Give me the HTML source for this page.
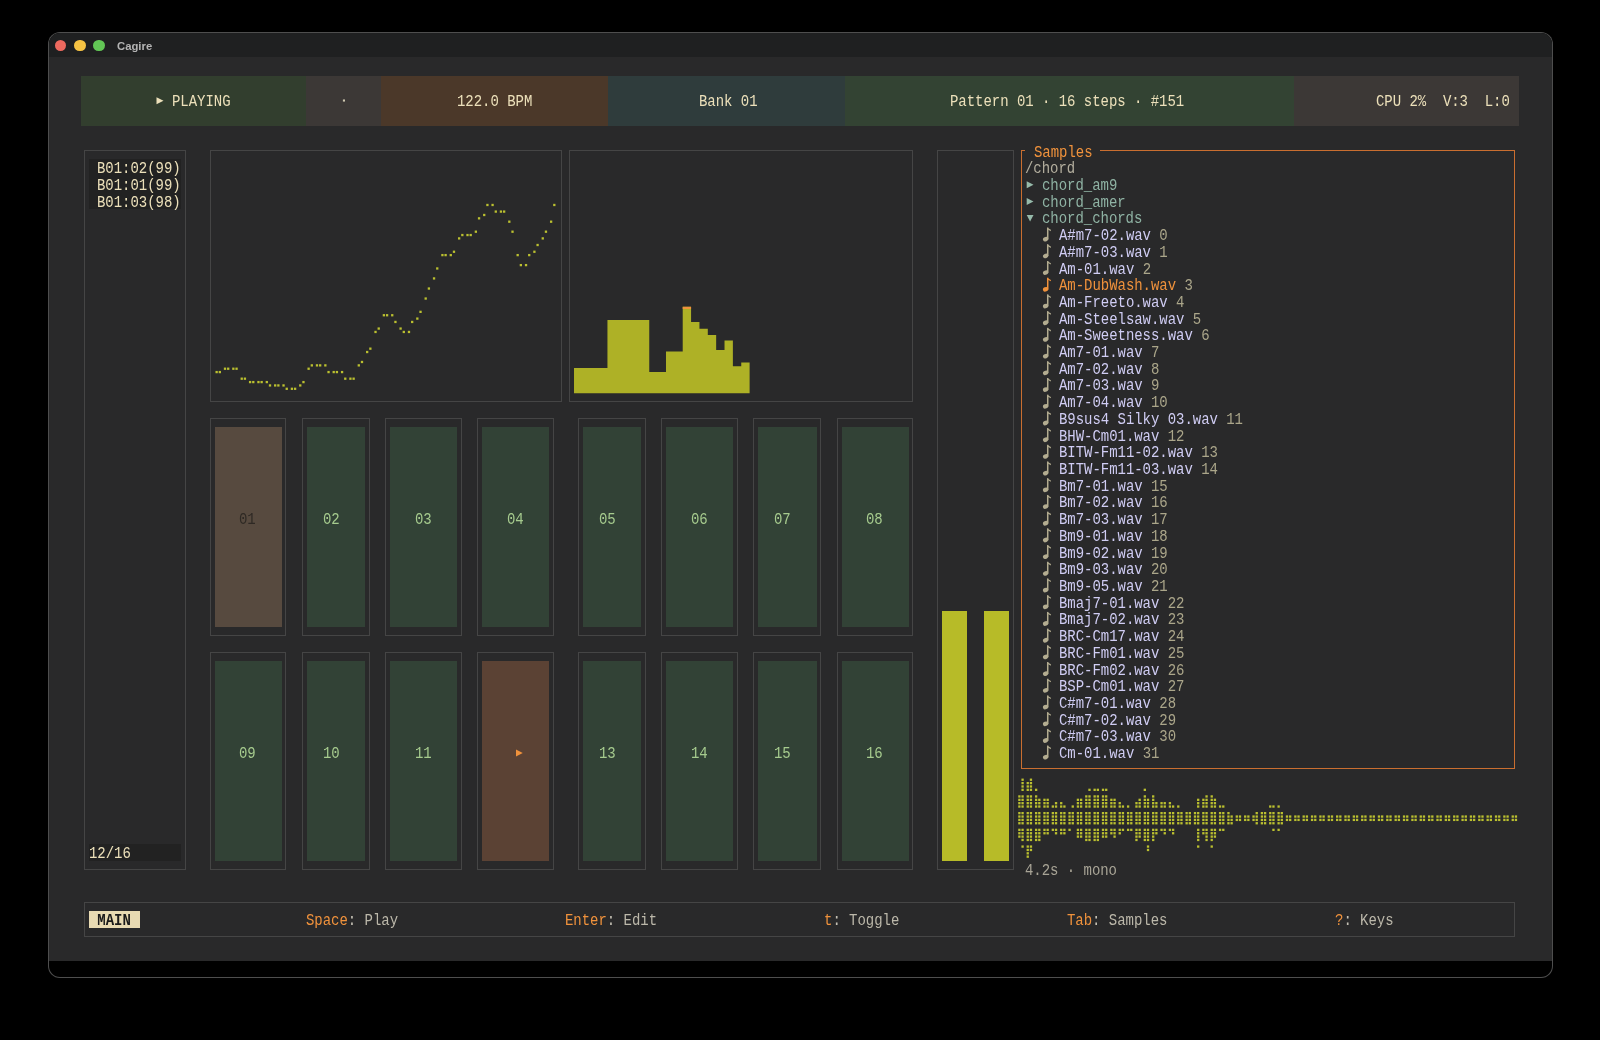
<!DOCTYPE html>
<html><head><meta charset="utf-8"><style>
html,body{margin:0;padding:0;background:#000;width:1600px;height:1040px;overflow:hidden}
.win{position:absolute;left:47.5px;top:32px;width:1505px;height:945.5px;border-radius:12px;background:#000;box-shadow:inset 0 0 0 1px #4e4e4e;overflow:hidden}
.tb{position:absolute;left:48.5px;top:33px;width:1503px;height:23.7px;background:#1f2021;border-radius:11px 11px 0 0}
.term{position:absolute;left:48.5px;top:56.7px;width:1503px;height:904.74px;background:#29292a}
.light{position:absolute;width:11.6px;height:11.6px;border-radius:50%;top:39.8px}
.title{position:absolute;left:117.3px;top:38.7px;font:bold 11.3px/14px "Liberation Sans",sans-serif;color:#b4b4b4;will-change:transform}
.r{position:absolute}
.t{position:absolute;white-space:pre;font-family:"Liberation Mono",monospace;font-size:14.0px;line-height:16.71px;letter-spacing:-0.0394px;transform:scaleY(1.16);transform-origin:0 13.37px;will-change:transform}
.ov{position:absolute;left:0;top:0}
</style></head><body>
<div class="win"></div>
<div class="tb"></div>
<div class="term"></div>
<div class="light" style="left:54.8px;background:#ee6a5f"></div>
<div class="light" style="left:74px;background:#f6c343"></div>
<div class="light" style="left:93.2px;background:#62c655"></div>
<div class="title">Cagire</div>
<div class="r" style="left:81.1px;top:75.81px;width:225.2px;height:50.13px;background:#323e2e;"></div><div class="r" style="left:306.3px;top:75.81px;width:74.9px;height:50.13px;background:#3c3836;"></div><div class="r" style="left:381.2px;top:75.81px;width:226.9px;height:50.13px;background:#4b3829;"></div><div class="r" style="left:608.1px;top:75.81px;width:236.6px;height:50.13px;background:#2f3c3c;"></div><div class="r" style="left:844.7px;top:75.81px;width:449.05px;height:50.13px;background:#334333;"></div><div class="r" style="left:1293.75px;top:75.81px;width:225.65px;height:50.13px;background:#3c3836;"></div><div class="t" style="left:172.23px;top:94.42px;color:#ece0ba;">PLAYING</div><div class="t" style="left:456.54px;top:94.42px;color:#ece0ba;">122.0 BPM</div><div class="t" style="left:699.04px;top:94.42px;color:#ece0ba;">Bank 01</div><div class="t" style="left:949.9px;top:94.42px;color:#ece0ba;">Pattern 01 · 16 steps · #151</div><div class="t" style="left:1376.36px;top:94.42px;color:#ece0ba;">CPU 2%  V:3  L:0</div><div class="r" style="left:84.43px;top:150.2px;width:101.34px;height:1px;background:#454545;"></div><div class="r" style="left:84.43px;top:868.74px;width:101.34px;height:1px;background:#454545;"></div><div class="r" style="left:84.43px;top:150.2px;width:1px;height:719.53px;background:#454545;"></div><div class="r" style="left:184.77px;top:150.2px;width:1px;height:719.53px;background:#454545;"></div><div class="r" style="left:89.46px;top:159.36px;width:91.98px;height:50.13px;background:#222222;"></div><div class="t" style="left:96.97px;top:161.26px;color:#ece0ba;">B01:02(99)</div><div class="t" style="left:96.97px;top:177.97px;color:#ece0ba;">B01:01(99)</div><div class="t" style="left:96.97px;top:194.68px;color:#ece0ba;">B01:03(98)</div><div class="r" style="left:89.46px;top:844.47px;width:91.98px;height:16.71px;background:#222222;"></div><div class="t" style="left:88.61px;top:846.37px;color:#ece0ba;">12/16</div><div class="r" style="left:209.86px;top:150.2px;width:352.2px;height:1px;background:#454545;"></div><div class="r" style="left:209.86px;top:400.86px;width:352.2px;height:1px;background:#454545;"></div><div class="r" style="left:209.86px;top:150.2px;width:1px;height:251.65px;background:#454545;"></div><div class="r" style="left:561.06px;top:150.2px;width:1px;height:251.65px;background:#454545;"></div><div class="r" style="left:569.42px;top:150.2px;width:343.84px;height:1px;background:#454545;"></div><div class="r" style="left:569.42px;top:400.86px;width:343.84px;height:1px;background:#454545;"></div><div class="r" style="left:569.42px;top:150.2px;width:1px;height:251.65px;background:#454545;"></div><div class="r" style="left:912.27px;top:150.2px;width:1px;height:251.65px;background:#454545;"></div><div class="r" style="left:209.86px;top:417.57px;width:76.26px;height:1px;background:#454545;"></div><div class="r" style="left:209.86px;top:634.8px;width:76.26px;height:1px;background:#454545;"></div><div class="r" style="left:209.86px;top:417.57px;width:1px;height:218.23px;background:#454545;"></div><div class="r" style="left:285.12px;top:417.57px;width:1px;height:218.23px;background:#454545;"></div><div class="r" style="left:214.89px;top:426.72px;width:66.9px;height:200.52px;background:#574a3f;"></div><div class="t" style="left:239.13px;top:512.17px;color:#2e2924;">01</div><div class="r" style="left:301.84px;top:417.57px;width:67.9px;height:1px;background:#454545;"></div><div class="r" style="left:301.84px;top:634.8px;width:67.9px;height:1px;background:#454545;"></div><div class="r" style="left:301.84px;top:417.57px;width:1px;height:218.23px;background:#454545;"></div><div class="r" style="left:368.74px;top:417.57px;width:1px;height:218.23px;background:#454545;"></div><div class="r" style="left:306.87px;top:426.72px;width:58.53px;height:200.52px;background:#324236;"></div><div class="t" style="left:322.75px;top:512.17px;color:#a6cb8e;">02</div><div class="r" style="left:385.46px;top:417.57px;width:76.26px;height:1px;background:#454545;"></div><div class="r" style="left:385.46px;top:634.8px;width:76.26px;height:1px;background:#454545;"></div><div class="r" style="left:385.46px;top:417.57px;width:1px;height:218.23px;background:#454545;"></div><div class="r" style="left:460.72px;top:417.57px;width:1px;height:218.23px;background:#454545;"></div><div class="r" style="left:390.49px;top:426.72px;width:66.9px;height:200.52px;background:#324236;"></div><div class="t" style="left:414.73px;top:512.17px;color:#a6cb8e;">03</div><div class="r" style="left:477.44px;top:417.57px;width:76.26px;height:1px;background:#454545;"></div><div class="r" style="left:477.44px;top:634.8px;width:76.26px;height:1px;background:#454545;"></div><div class="r" style="left:477.44px;top:417.57px;width:1px;height:218.23px;background:#454545;"></div><div class="r" style="left:552.7px;top:417.57px;width:1px;height:218.23px;background:#454545;"></div><div class="r" style="left:482.47px;top:426.72px;width:66.9px;height:200.52px;background:#324236;"></div><div class="t" style="left:506.71px;top:512.17px;color:#a6cb8e;">04</div><div class="r" style="left:577.79px;top:417.57px;width:67.9px;height:1px;background:#454545;"></div><div class="r" style="left:577.79px;top:634.8px;width:67.9px;height:1px;background:#454545;"></div><div class="r" style="left:577.79px;top:417.57px;width:1px;height:218.23px;background:#454545;"></div><div class="r" style="left:644.68px;top:417.57px;width:1px;height:218.23px;background:#454545;"></div><div class="r" style="left:582.82px;top:426.72px;width:58.53px;height:200.52px;background:#324236;"></div><div class="t" style="left:598.69px;top:512.17px;color:#a6cb8e;">05</div><div class="r" style="left:661.41px;top:417.57px;width:76.26px;height:1px;background:#454545;"></div><div class="r" style="left:661.41px;top:634.8px;width:76.26px;height:1px;background:#454545;"></div><div class="r" style="left:661.41px;top:417.57px;width:1px;height:218.23px;background:#454545;"></div><div class="r" style="left:736.66px;top:417.57px;width:1px;height:218.23px;background:#454545;"></div><div class="r" style="left:666.44px;top:426.72px;width:66.9px;height:200.52px;background:#324236;"></div><div class="t" style="left:690.67px;top:512.17px;color:#a6cb8e;">06</div><div class="r" style="left:753.39px;top:417.57px;width:67.9px;height:1px;background:#454545;"></div><div class="r" style="left:753.39px;top:634.8px;width:67.9px;height:1px;background:#454545;"></div><div class="r" style="left:753.39px;top:417.57px;width:1px;height:218.23px;background:#454545;"></div><div class="r" style="left:820.28px;top:417.57px;width:1px;height:218.23px;background:#454545;"></div><div class="r" style="left:758.42px;top:426.72px;width:58.53px;height:200.52px;background:#324236;"></div><div class="t" style="left:774.29px;top:512.17px;color:#a6cb8e;">07</div><div class="r" style="left:837.01px;top:417.57px;width:76.26px;height:1px;background:#454545;"></div><div class="r" style="left:837.01px;top:634.8px;width:76.26px;height:1px;background:#454545;"></div><div class="r" style="left:837.01px;top:417.57px;width:1px;height:218.23px;background:#454545;"></div><div class="r" style="left:912.27px;top:417.57px;width:1px;height:218.23px;background:#454545;"></div><div class="r" style="left:842.04px;top:426.72px;width:66.9px;height:200.52px;background:#324236;"></div><div class="t" style="left:866.28px;top:512.17px;color:#a6cb8e;">08</div><div class="r" style="left:209.86px;top:651.51px;width:76.26px;height:1px;background:#454545;"></div><div class="r" style="left:209.86px;top:868.74px;width:76.26px;height:1px;background:#454545;"></div><div class="r" style="left:209.86px;top:651.51px;width:1px;height:218.23px;background:#454545;"></div><div class="r" style="left:285.12px;top:651.51px;width:1px;height:218.23px;background:#454545;"></div><div class="r" style="left:214.89px;top:660.66px;width:66.9px;height:200.52px;background:#324236;"></div><div class="t" style="left:239.13px;top:746.11px;color:#a6cb8e;">09</div><div class="r" style="left:301.84px;top:651.51px;width:67.9px;height:1px;background:#454545;"></div><div class="r" style="left:301.84px;top:868.74px;width:67.9px;height:1px;background:#454545;"></div><div class="r" style="left:301.84px;top:651.51px;width:1px;height:218.23px;background:#454545;"></div><div class="r" style="left:368.74px;top:651.51px;width:1px;height:218.23px;background:#454545;"></div><div class="r" style="left:306.87px;top:660.66px;width:58.53px;height:200.52px;background:#324236;"></div><div class="t" style="left:322.75px;top:746.11px;color:#a6cb8e;">10</div><div class="r" style="left:385.46px;top:651.51px;width:76.26px;height:1px;background:#454545;"></div><div class="r" style="left:385.46px;top:868.74px;width:76.26px;height:1px;background:#454545;"></div><div class="r" style="left:385.46px;top:651.51px;width:1px;height:218.23px;background:#454545;"></div><div class="r" style="left:460.72px;top:651.51px;width:1px;height:218.23px;background:#454545;"></div><div class="r" style="left:390.49px;top:660.66px;width:66.9px;height:200.52px;background:#324236;"></div><div class="t" style="left:414.73px;top:746.11px;color:#a6cb8e;">11</div><div class="r" style="left:477.44px;top:651.51px;width:76.26px;height:1px;background:#454545;"></div><div class="r" style="left:477.44px;top:868.74px;width:76.26px;height:1px;background:#454545;"></div><div class="r" style="left:477.44px;top:651.51px;width:1px;height:218.23px;background:#454545;"></div><div class="r" style="left:552.7px;top:651.51px;width:1px;height:218.23px;background:#454545;"></div><div class="r" style="left:482.47px;top:660.66px;width:66.9px;height:200.52px;background:#5b4234;"></div><div class="r" style="left:577.79px;top:651.51px;width:67.9px;height:1px;background:#454545;"></div><div class="r" style="left:577.79px;top:868.74px;width:67.9px;height:1px;background:#454545;"></div><div class="r" style="left:577.79px;top:651.51px;width:1px;height:218.23px;background:#454545;"></div><div class="r" style="left:644.68px;top:651.51px;width:1px;height:218.23px;background:#454545;"></div><div class="r" style="left:582.82px;top:660.66px;width:58.53px;height:200.52px;background:#324236;"></div><div class="t" style="left:598.69px;top:746.11px;color:#a6cb8e;">13</div><div class="r" style="left:661.41px;top:651.51px;width:76.26px;height:1px;background:#454545;"></div><div class="r" style="left:661.41px;top:868.74px;width:76.26px;height:1px;background:#454545;"></div><div class="r" style="left:661.41px;top:651.51px;width:1px;height:218.23px;background:#454545;"></div><div class="r" style="left:736.66px;top:651.51px;width:1px;height:218.23px;background:#454545;"></div><div class="r" style="left:666.44px;top:660.66px;width:66.9px;height:200.52px;background:#324236;"></div><div class="t" style="left:690.67px;top:746.11px;color:#a6cb8e;">14</div><div class="r" style="left:753.39px;top:651.51px;width:67.9px;height:1px;background:#454545;"></div><div class="r" style="left:753.39px;top:868.74px;width:67.9px;height:1px;background:#454545;"></div><div class="r" style="left:753.39px;top:651.51px;width:1px;height:218.23px;background:#454545;"></div><div class="r" style="left:820.28px;top:651.51px;width:1px;height:218.23px;background:#454545;"></div><div class="r" style="left:758.42px;top:660.66px;width:58.53px;height:200.52px;background:#324236;"></div><div class="t" style="left:774.29px;top:746.11px;color:#a6cb8e;">15</div><div class="r" style="left:837.01px;top:651.51px;width:76.26px;height:1px;background:#454545;"></div><div class="r" style="left:837.01px;top:868.74px;width:76.26px;height:1px;background:#454545;"></div><div class="r" style="left:837.01px;top:651.51px;width:1px;height:218.23px;background:#454545;"></div><div class="r" style="left:912.27px;top:651.51px;width:1px;height:218.23px;background:#454545;"></div><div class="r" style="left:842.04px;top:660.66px;width:66.9px;height:200.52px;background:#324236;"></div><div class="t" style="left:866.28px;top:746.11px;color:#a6cb8e;">16</div><div class="r" style="left:937.35px;top:150.2px;width:76.26px;height:1px;background:#454545;"></div><div class="r" style="left:937.35px;top:868.74px;width:76.26px;height:1px;background:#454545;"></div><div class="r" style="left:937.35px;top:150.2px;width:1px;height:719.53px;background:#454545;"></div><div class="r" style="left:1012.61px;top:150.2px;width:1px;height:719.53px;background:#454545;"></div><div class="r" style="left:942.38px;top:610.53px;width:25.09px;height:250.65px;background:#b7bb28;"></div><div class="r" style="left:984.19px;top:610.53px;width:25.09px;height:250.65px;background:#b7bb28;"></div><div class="r" style="left:1020.97px;top:150.2px;width:4.18px;height:1px;background:#c96e30;"></div><div class="r" style="left:1100.41px;top:150.2px;width:414.92px;height:1px;background:#c96e30;"></div><div class="r" style="left:1020.97px;top:768.48px;width:494.36px;height:1px;background:#c96e30;"></div><div class="r" style="left:1020.97px;top:150.2px;width:1px;height:619.27px;background:#c96e30;"></div><div class="r" style="left:1514.33px;top:150.2px;width:1px;height:619.27px;background:#c96e30;"></div><div class="t" style="left:1033.52px;top:144.55px;color:#f0923c;">Samples</div><div class="t" style="left:1025.15px;top:161.26px;color:#b3ae9e;">/chord</div><div class="t" style="left:1041.88px;top:177.97px;color:#8fb3a4;">chord_am9</div><div class="t" style="left:1041.88px;top:194.68px;color:#8fb3a4;">chord_amer</div><div class="t" style="left:1041.88px;top:211.39px;color:#8fb3a4;">chord_chords</div><div class="t" style="left:1058.6px;top:228.1px"><span style="color:#d0cdf4">A#m7-02.wav</span><span style="color:#aba68a"> 0</span></div><div class="t" style="left:1058.6px;top:244.81px"><span style="color:#d0cdf4">A#m7-03.wav</span><span style="color:#aba68a"> 1</span></div><div class="t" style="left:1058.6px;top:261.52px"><span style="color:#d0cdf4">Am-01.wav</span><span style="color:#aba68a"> 2</span></div><div class="t" style="left:1058.6px;top:278.23px"><span style="color:#f0923c">Am-DubWash.wav</span><span style="color:#aba68a"> 3</span></div><div class="t" style="left:1058.6px;top:294.94px"><span style="color:#d0cdf4">Am-Freeto.wav</span><span style="color:#aba68a"> 4</span></div><div class="t" style="left:1058.6px;top:311.65px"><span style="color:#d0cdf4">Am-Steelsaw.wav</span><span style="color:#aba68a"> 5</span></div><div class="t" style="left:1058.6px;top:328.36px"><span style="color:#d0cdf4">Am-Sweetness.wav</span><span style="color:#aba68a"> 6</span></div><div class="t" style="left:1058.6px;top:345.07px"><span style="color:#d0cdf4">Am7-01.wav</span><span style="color:#aba68a"> 7</span></div><div class="t" style="left:1058.6px;top:361.78px"><span style="color:#d0cdf4">Am7-02.wav</span><span style="color:#aba68a"> 8</span></div><div class="t" style="left:1058.6px;top:378.49px"><span style="color:#d0cdf4">Am7-03.wav</span><span style="color:#aba68a"> 9</span></div><div class="t" style="left:1058.6px;top:395.2px"><span style="color:#d0cdf4">Am7-04.wav</span><span style="color:#aba68a"> 10</span></div><div class="t" style="left:1058.6px;top:411.91px"><span style="color:#d0cdf4">B9sus4 Silky 03.wav</span><span style="color:#aba68a"> 11</span></div><div class="t" style="left:1058.6px;top:428.62px"><span style="color:#d0cdf4">BHW-Cm01.wav</span><span style="color:#aba68a"> 12</span></div><div class="t" style="left:1058.6px;top:445.33px"><span style="color:#d0cdf4">BITW-Fm11-02.wav</span><span style="color:#aba68a"> 13</span></div><div class="t" style="left:1058.6px;top:462.04px"><span style="color:#d0cdf4">BITW-Fm11-03.wav</span><span style="color:#aba68a"> 14</span></div><div class="t" style="left:1058.6px;top:478.75px"><span style="color:#d0cdf4">Bm7-01.wav</span><span style="color:#aba68a"> 15</span></div><div class="t" style="left:1058.6px;top:495.46px"><span style="color:#d0cdf4">Bm7-02.wav</span><span style="color:#aba68a"> 16</span></div><div class="t" style="left:1058.6px;top:512.17px"><span style="color:#d0cdf4">Bm7-03.wav</span><span style="color:#aba68a"> 17</span></div><div class="t" style="left:1058.6px;top:528.88px"><span style="color:#d0cdf4">Bm9-01.wav</span><span style="color:#aba68a"> 18</span></div><div class="t" style="left:1058.6px;top:545.59px"><span style="color:#d0cdf4">Bm9-02.wav</span><span style="color:#aba68a"> 19</span></div><div class="t" style="left:1058.6px;top:562.3px"><span style="color:#d0cdf4">Bm9-03.wav</span><span style="color:#aba68a"> 20</span></div><div class="t" style="left:1058.6px;top:579.01px"><span style="color:#d0cdf4">Bm9-05.wav</span><span style="color:#aba68a"> 21</span></div><div class="t" style="left:1058.6px;top:595.72px"><span style="color:#d0cdf4">Bmaj7-01.wav</span><span style="color:#aba68a"> 22</span></div><div class="t" style="left:1058.6px;top:612.43px"><span style="color:#d0cdf4">Bmaj7-02.wav</span><span style="color:#aba68a"> 23</span></div><div class="t" style="left:1058.6px;top:629.14px"><span style="color:#d0cdf4">BRC-Cm17.wav</span><span style="color:#aba68a"> 24</span></div><div class="t" style="left:1058.6px;top:645.85px"><span style="color:#d0cdf4">BRC-Fm01.wav</span><span style="color:#aba68a"> 25</span></div><div class="t" style="left:1058.6px;top:662.56px"><span style="color:#d0cdf4">BRC-Fm02.wav</span><span style="color:#aba68a"> 26</span></div><div class="t" style="left:1058.6px;top:679.27px"><span style="color:#d0cdf4">BSP-Cm01.wav</span><span style="color:#aba68a"> 27</span></div><div class="t" style="left:1058.6px;top:695.98px"><span style="color:#d0cdf4">C#m7-01.wav</span><span style="color:#aba68a"> 28</span></div><div class="t" style="left:1058.6px;top:712.69px"><span style="color:#d0cdf4">C#m7-02.wav</span><span style="color:#aba68a"> 29</span></div><div class="t" style="left:1058.6px;top:729.4px"><span style="color:#d0cdf4">C#m7-03.wav</span><span style="color:#aba68a"> 30</span></div><div class="t" style="left:1058.6px;top:746.11px"><span style="color:#d0cdf4">Cm-01.wav</span><span style="color:#aba68a"> 31</span></div><div class="t" style="left:1025.15px;top:863.08px;color:#a8a496;">4.2s · mono</div><div class="r" style="left:84.43px;top:902.16px;width:1430.9px;height:1px;background:#454545;"></div><div class="r" style="left:84.43px;top:935.58px;width:1430.9px;height:1px;background:#454545;"></div><div class="r" style="left:84.43px;top:902.16px;width:1px;height:34.42px;background:#454545;"></div><div class="r" style="left:1514.33px;top:902.16px;width:1px;height:34.42px;background:#454545;"></div><div class="r" style="left:89.46px;top:911.31px;width:50.17px;height:16.71px;background:#e8dab2;"></div><div class="t" style="left:88.61px;top:913.21px;color:#1a1a1a;font-weight:bold;"> MAIN </div><div class="t" style="left:306.02px;top:913.21px"><span style="color:#f0923c">Space</span><span style="color:#c4c0b4">: </span><span style="color:#bcb8aa">Play</span></div><div class="t" style="left:565.24px;top:913.21px"><span style="color:#f0923c">Enter</span><span style="color:#c4c0b4">: </span><span style="color:#bcb8aa">Edit</span></div><div class="t" style="left:824.47px;top:913.21px"><span style="color:#f0923c">t</span><span style="color:#c4c0b4">: </span><span style="color:#bcb8aa">Toggle</span></div><div class="t" style="left:1066.96px;top:913.21px"><span style="color:#f0923c">Tab</span><span style="color:#c4c0b4">: </span><span style="color:#bcb8aa">Samples</span></div><div class="t" style="left:1334.55px;top:913.21px"><span style="color:#f0923c">?</span><span style="color:#c4c0b4">: </span><span style="color:#bcb8aa">Keys</span></div>
<svg class="ov" width="1600" height="1040" viewBox="0 0 1600 1040"><g fill="#aeb126"><path d="M574.01 393.3L574.01 368L607.45 368L607.45 319.9L649.26 319.9L649.26 372.1L665.99 372.1L665.99 351.5L682.71 351.5L682.71 306.8L691.07 306.8L691.07 321.9L699.44 321.9L699.44 328.8L707.8 328.8L707.8 335L716.16 335L716.16 350.1L724.52 350.1L724.52 340.5L732.88 340.5L732.88 366.3L741.25 366.3L741.25 362.5L749.61 362.5L749.61 393.3Z"/></g><rect x="682.71" y="306.8" width="8.36" height="2.2" fill="#f0923c"/><path d="M156.51 97.32L163.51 100.82L156.51 104.32Z" fill="#ece0ba"/><rect x="342.9" y="99.47" width="2.1" height="2.1" fill="#cfc8b0"/><path d="M515.97 749.61L522.77 753.11L515.97 756.61Z" fill="#f0923c"/><path d="M1026.7 181.17L1033.5 184.67L1026.7 188.17Z" fill="#96baaa"/><path d="M1026.7 197.88L1033.5 201.38L1026.7 204.88Z" fill="#96baaa"/><path d="M1026.7 214.89L1033.5 214.89L1030.1 221.59Z" fill="#96baaa"/><g fill="#b3ac90"><rect x="1046.98" y="227.6" width="1.5" height="11.8"/><path d="M1046.98 227.6L1050.88 229.8L1050.88 231.2L1046.98 229.1Z"/><ellipse cx="1045.58" cy="239.2" rx="2.7" ry="2.2" transform="rotate(-25 1045.58 239.2)"/></g><g fill="#b3ac90"><rect x="1046.98" y="244.31" width="1.5" height="11.8"/><path d="M1046.98 244.31L1050.88 246.51L1050.88 247.91L1046.98 245.81Z"/><ellipse cx="1045.58" cy="255.91" rx="2.7" ry="2.2" transform="rotate(-25 1045.58 255.91)"/></g><g fill="#b3ac90"><rect x="1046.98" y="261.02" width="1.5" height="11.8"/><path d="M1046.98 261.02L1050.88 263.22L1050.88 264.62L1046.98 262.52Z"/><ellipse cx="1045.58" cy="272.62" rx="2.7" ry="2.2" transform="rotate(-25 1045.58 272.62)"/></g><g fill="#f0923c"><rect x="1046.98" y="277.73" width="1.5" height="11.8"/><path d="M1046.98 277.73L1050.88 279.93L1050.88 281.33L1046.98 279.23Z"/><ellipse cx="1045.58" cy="289.33" rx="2.7" ry="2.2" transform="rotate(-25 1045.58 289.33)"/></g><g fill="#b3ac90"><rect x="1046.98" y="294.44" width="1.5" height="11.8"/><path d="M1046.98 294.44L1050.88 296.64L1050.88 298.04L1046.98 295.94Z"/><ellipse cx="1045.58" cy="306.04" rx="2.7" ry="2.2" transform="rotate(-25 1045.58 306.04)"/></g><g fill="#b3ac90"><rect x="1046.98" y="311.15" width="1.5" height="11.8"/><path d="M1046.98 311.15L1050.88 313.35L1050.88 314.75L1046.98 312.65Z"/><ellipse cx="1045.58" cy="322.75" rx="2.7" ry="2.2" transform="rotate(-25 1045.58 322.75)"/></g><g fill="#b3ac90"><rect x="1046.98" y="327.86" width="1.5" height="11.8"/><path d="M1046.98 327.86L1050.88 330.06L1050.88 331.46L1046.98 329.36Z"/><ellipse cx="1045.58" cy="339.46" rx="2.7" ry="2.2" transform="rotate(-25 1045.58 339.46)"/></g><g fill="#b3ac90"><rect x="1046.98" y="344.57" width="1.5" height="11.8"/><path d="M1046.98 344.57L1050.88 346.77L1050.88 348.17L1046.98 346.07Z"/><ellipse cx="1045.58" cy="356.17" rx="2.7" ry="2.2" transform="rotate(-25 1045.58 356.17)"/></g><g fill="#b3ac90"><rect x="1046.98" y="361.28" width="1.5" height="11.8"/><path d="M1046.98 361.28L1050.88 363.48L1050.88 364.88L1046.98 362.78Z"/><ellipse cx="1045.58" cy="372.88" rx="2.7" ry="2.2" transform="rotate(-25 1045.58 372.88)"/></g><g fill="#b3ac90"><rect x="1046.98" y="377.99" width="1.5" height="11.8"/><path d="M1046.98 377.99L1050.88 380.19L1050.88 381.59L1046.98 379.49Z"/><ellipse cx="1045.58" cy="389.59" rx="2.7" ry="2.2" transform="rotate(-25 1045.58 389.59)"/></g><g fill="#b3ac90"><rect x="1046.98" y="394.7" width="1.5" height="11.8"/><path d="M1046.98 394.7L1050.88 396.9L1050.88 398.3L1046.98 396.2Z"/><ellipse cx="1045.58" cy="406.3" rx="2.7" ry="2.2" transform="rotate(-25 1045.58 406.3)"/></g><g fill="#b3ac90"><rect x="1046.98" y="411.41" width="1.5" height="11.8"/><path d="M1046.98 411.41L1050.88 413.61L1050.88 415.01L1046.98 412.91Z"/><ellipse cx="1045.58" cy="423.01" rx="2.7" ry="2.2" transform="rotate(-25 1045.58 423.01)"/></g><g fill="#b3ac90"><rect x="1046.98" y="428.12" width="1.5" height="11.8"/><path d="M1046.98 428.12L1050.88 430.32L1050.88 431.72L1046.98 429.62Z"/><ellipse cx="1045.58" cy="439.72" rx="2.7" ry="2.2" transform="rotate(-25 1045.58 439.72)"/></g><g fill="#b3ac90"><rect x="1046.98" y="444.83" width="1.5" height="11.8"/><path d="M1046.98 444.83L1050.88 447.03L1050.88 448.43L1046.98 446.33Z"/><ellipse cx="1045.58" cy="456.43" rx="2.7" ry="2.2" transform="rotate(-25 1045.58 456.43)"/></g><g fill="#b3ac90"><rect x="1046.98" y="461.54" width="1.5" height="11.8"/><path d="M1046.98 461.54L1050.88 463.74L1050.88 465.14L1046.98 463.04Z"/><ellipse cx="1045.58" cy="473.14" rx="2.7" ry="2.2" transform="rotate(-25 1045.58 473.14)"/></g><g fill="#b3ac90"><rect x="1046.98" y="478.25" width="1.5" height="11.8"/><path d="M1046.98 478.25L1050.88 480.45L1050.88 481.85L1046.98 479.75Z"/><ellipse cx="1045.58" cy="489.85" rx="2.7" ry="2.2" transform="rotate(-25 1045.58 489.85)"/></g><g fill="#b3ac90"><rect x="1046.98" y="494.96" width="1.5" height="11.8"/><path d="M1046.98 494.96L1050.88 497.16L1050.88 498.56L1046.98 496.46Z"/><ellipse cx="1045.58" cy="506.56" rx="2.7" ry="2.2" transform="rotate(-25 1045.58 506.56)"/></g><g fill="#b3ac90"><rect x="1046.98" y="511.67" width="1.5" height="11.8"/><path d="M1046.98 511.67L1050.88 513.87L1050.88 515.27L1046.98 513.17Z"/><ellipse cx="1045.58" cy="523.27" rx="2.7" ry="2.2" transform="rotate(-25 1045.58 523.27)"/></g><g fill="#b3ac90"><rect x="1046.98" y="528.38" width="1.5" height="11.8"/><path d="M1046.98 528.38L1050.88 530.58L1050.88 531.98L1046.98 529.88Z"/><ellipse cx="1045.58" cy="539.98" rx="2.7" ry="2.2" transform="rotate(-25 1045.58 539.98)"/></g><g fill="#b3ac90"><rect x="1046.98" y="545.09" width="1.5" height="11.8"/><path d="M1046.98 545.09L1050.88 547.29L1050.88 548.69L1046.98 546.59Z"/><ellipse cx="1045.58" cy="556.69" rx="2.7" ry="2.2" transform="rotate(-25 1045.58 556.69)"/></g><g fill="#b3ac90"><rect x="1046.98" y="561.8" width="1.5" height="11.8"/><path d="M1046.98 561.8L1050.88 564L1050.88 565.4L1046.98 563.3Z"/><ellipse cx="1045.58" cy="573.4" rx="2.7" ry="2.2" transform="rotate(-25 1045.58 573.4)"/></g><g fill="#b3ac90"><rect x="1046.98" y="578.51" width="1.5" height="11.8"/><path d="M1046.98 578.51L1050.88 580.71L1050.88 582.11L1046.98 580.01Z"/><ellipse cx="1045.58" cy="590.11" rx="2.7" ry="2.2" transform="rotate(-25 1045.58 590.11)"/></g><g fill="#b3ac90"><rect x="1046.98" y="595.22" width="1.5" height="11.8"/><path d="M1046.98 595.22L1050.88 597.42L1050.88 598.82L1046.98 596.72Z"/><ellipse cx="1045.58" cy="606.82" rx="2.7" ry="2.2" transform="rotate(-25 1045.58 606.82)"/></g><g fill="#b3ac90"><rect x="1046.98" y="611.93" width="1.5" height="11.8"/><path d="M1046.98 611.93L1050.88 614.13L1050.88 615.53L1046.98 613.43Z"/><ellipse cx="1045.58" cy="623.53" rx="2.7" ry="2.2" transform="rotate(-25 1045.58 623.53)"/></g><g fill="#b3ac90"><rect x="1046.98" y="628.64" width="1.5" height="11.8"/><path d="M1046.98 628.64L1050.88 630.84L1050.88 632.24L1046.98 630.14Z"/><ellipse cx="1045.58" cy="640.24" rx="2.7" ry="2.2" transform="rotate(-25 1045.58 640.24)"/></g><g fill="#b3ac90"><rect x="1046.98" y="645.35" width="1.5" height="11.8"/><path d="M1046.98 645.35L1050.88 647.55L1050.88 648.95L1046.98 646.85Z"/><ellipse cx="1045.58" cy="656.95" rx="2.7" ry="2.2" transform="rotate(-25 1045.58 656.95)"/></g><g fill="#b3ac90"><rect x="1046.98" y="662.06" width="1.5" height="11.8"/><path d="M1046.98 662.06L1050.88 664.26L1050.88 665.66L1046.98 663.56Z"/><ellipse cx="1045.58" cy="673.66" rx="2.7" ry="2.2" transform="rotate(-25 1045.58 673.66)"/></g><g fill="#b3ac90"><rect x="1046.98" y="678.77" width="1.5" height="11.8"/><path d="M1046.98 678.77L1050.88 680.97L1050.88 682.37L1046.98 680.27Z"/><ellipse cx="1045.58" cy="690.37" rx="2.7" ry="2.2" transform="rotate(-25 1045.58 690.37)"/></g><g fill="#b3ac90"><rect x="1046.98" y="695.48" width="1.5" height="11.8"/><path d="M1046.98 695.48L1050.88 697.68L1050.88 699.08L1046.98 696.98Z"/><ellipse cx="1045.58" cy="707.08" rx="2.7" ry="2.2" transform="rotate(-25 1045.58 707.08)"/></g><g fill="#b3ac90"><rect x="1046.98" y="712.19" width="1.5" height="11.8"/><path d="M1046.98 712.19L1050.88 714.39L1050.88 715.79L1046.98 713.69Z"/><ellipse cx="1045.58" cy="723.79" rx="2.7" ry="2.2" transform="rotate(-25 1045.58 723.79)"/></g><g fill="#b3ac90"><rect x="1046.98" y="728.9" width="1.5" height="11.8"/><path d="M1046.98 728.9L1050.88 731.1L1050.88 732.5L1046.98 730.4Z"/><ellipse cx="1045.58" cy="740.5" rx="2.7" ry="2.2" transform="rotate(-25 1045.58 740.5)"/></g><g fill="#b3ac90"><rect x="1046.98" y="745.61" width="1.5" height="11.8"/><path d="M1046.98 745.61L1050.88 747.81L1050.88 749.21L1046.98 747.11Z"/><ellipse cx="1045.58" cy="757.21" rx="2.7" ry="2.2" transform="rotate(-25 1045.58 757.21)"/></g><g fill="#bbc030"><rect x="215.49" y="370.93" width="2.3" height="2.3"/><rect x="218.69" y="370.93" width="2.3" height="2.3"/><rect x="223.85" y="367.58" width="2.3" height="2.3"/><rect x="227.05" y="367.58" width="2.3" height="2.3"/><rect x="232.21" y="367.58" width="2.3" height="2.3"/><rect x="235.41" y="367.58" width="2.3" height="2.3"/><rect x="240.58" y="377.54" width="2.3" height="2.3"/><rect x="243.78" y="377.54" width="2.3" height="2.3"/><rect x="248.94" y="380.94" width="2.3" height="2.3"/><rect x="252.14" y="380.94" width="2.3" height="2.3"/><rect x="257.3" y="380.94" width="2.3" height="2.3"/><rect x="260.5" y="380.94" width="2.3" height="2.3"/><rect x="265.66" y="380.94" width="2.3" height="2.3"/><rect x="268.86" y="384.29" width="2.3" height="2.3"/><rect x="274.02" y="384.29" width="2.3" height="2.3"/><rect x="277.22" y="384.29" width="2.3" height="2.3"/><rect x="282.39" y="384.29" width="2.3" height="2.3"/><rect x="285.59" y="387.64" width="2.3" height="2.3"/><rect x="290.75" y="387.64" width="2.3" height="2.3"/><rect x="293.95" y="387.64" width="2.3" height="2.3"/><rect x="299.11" y="384.29" width="2.3" height="2.3"/><rect x="302.31" y="380.94" width="2.3" height="2.3"/><rect x="307.47" y="367.58" width="2.3" height="2.3"/><rect x="310.67" y="364.23" width="2.3" height="2.3"/><rect x="315.83" y="364.23" width="2.3" height="2.3"/><rect x="319.03" y="364.23" width="2.3" height="2.3"/><rect x="324.2" y="364.23" width="2.3" height="2.3"/><rect x="327.4" y="370.93" width="2.3" height="2.3"/><rect x="332.56" y="370.93" width="2.3" height="2.3"/><rect x="335.76" y="370.93" width="2.3" height="2.3"/><rect x="340.92" y="370.93" width="2.3" height="2.3"/><rect x="344.12" y="377.54" width="2.3" height="2.3"/><rect x="349.28" y="377.54" width="2.3" height="2.3"/><rect x="352.48" y="377.54" width="2.3" height="2.3"/><rect x="357.64" y="364.23" width="2.3" height="2.3"/><rect x="360.84" y="360.83" width="2.3" height="2.3"/><rect x="366.01" y="350.87" width="2.3" height="2.3"/><rect x="369.21" y="347.52" width="2.3" height="2.3"/><rect x="374.37" y="330.81" width="2.3" height="2.3"/><rect x="377.57" y="327.41" width="2.3" height="2.3"/><rect x="382.73" y="314.1" width="2.3" height="2.3"/><rect x="385.93" y="314.1" width="2.3" height="2.3"/><rect x="391.09" y="314.1" width="2.3" height="2.3"/><rect x="394.29" y="320.8" width="2.3" height="2.3"/><rect x="399.45" y="327.41" width="2.3" height="2.3"/><rect x="402.65" y="330.81" width="2.3" height="2.3"/><rect x="407.82" y="330.81" width="2.3" height="2.3"/><rect x="411.02" y="320.8" width="2.3" height="2.3"/><rect x="416.18" y="317.45" width="2.3" height="2.3"/><rect x="419.38" y="310.7" width="2.3" height="2.3"/><rect x="424.54" y="297.39" width="2.3" height="2.3"/><rect x="427.74" y="287.38" width="2.3" height="2.3"/><rect x="432.9" y="277.28" width="2.3" height="2.3"/><rect x="436.1" y="267.32" width="2.3" height="2.3"/><rect x="441.26" y="253.96" width="2.3" height="2.3"/><rect x="444.46" y="253.96" width="2.3" height="2.3"/><rect x="449.63" y="253.96" width="2.3" height="2.3"/><rect x="452.83" y="250.61" width="2.3" height="2.3"/><rect x="457.99" y="237.25" width="2.3" height="2.3"/><rect x="461.19" y="233.9" width="2.3" height="2.3"/><rect x="466.35" y="233.9" width="2.3" height="2.3"/><rect x="469.55" y="233.9" width="2.3" height="2.3"/><rect x="474.71" y="230.55" width="2.3" height="2.3"/><rect x="477.91" y="217.19" width="2.3" height="2.3"/><rect x="483.07" y="213.84" width="2.3" height="2.3"/><rect x="486.27" y="203.83" width="2.3" height="2.3"/><rect x="491.44" y="203.83" width="2.3" height="2.3"/><rect x="494.64" y="210.44" width="2.3" height="2.3"/><rect x="499.8" y="210.44" width="2.3" height="2.3"/><rect x="503" y="210.44" width="2.3" height="2.3"/><rect x="508.16" y="220.54" width="2.3" height="2.3"/><rect x="511.36" y="230.55" width="2.3" height="2.3"/><rect x="516.52" y="253.96" width="2.3" height="2.3"/><rect x="519.72" y="263.97" width="2.3" height="2.3"/><rect x="524.88" y="263.97" width="2.3" height="2.3"/><rect x="528.08" y="253.96" width="2.3" height="2.3"/><rect x="533.25" y="250.61" width="2.3" height="2.3"/><rect x="536.45" y="243.86" width="2.3" height="2.3"/><rect x="541.61" y="237.25" width="2.3" height="2.3"/><rect x="544.81" y="230.55" width="2.3" height="2.3"/><rect x="549.97" y="220.54" width="2.3" height="2.3"/><rect x="553.17" y="203.83" width="2.3" height="2.3"/><rect x="1018.24" y="795.29" width="2.3" height="2.3"/><rect x="1018.24" y="798.69" width="2.3" height="2.3"/><rect x="1018.24" y="802.04" width="2.3" height="2.3"/><rect x="1018.24" y="805.39" width="2.3" height="2.3"/><rect x="1018.24" y="812" width="2.3" height="2.3"/><rect x="1018.24" y="815.4" width="2.3" height="2.3"/><rect x="1018.24" y="818.75" width="2.3" height="2.3"/><rect x="1018.24" y="822.1" width="2.3" height="2.3"/><rect x="1018.24" y="828.71" width="2.3" height="2.3"/><rect x="1018.24" y="832.11" width="2.3" height="2.3"/><rect x="1018.24" y="835.46" width="2.3" height="2.3"/><rect x="1021.44" y="778.58" width="2.3" height="2.3"/><rect x="1021.44" y="781.98" width="2.3" height="2.3"/><rect x="1021.44" y="785.33" width="2.3" height="2.3"/><rect x="1021.44" y="788.68" width="2.3" height="2.3"/><rect x="1021.44" y="795.29" width="2.3" height="2.3"/><rect x="1021.44" y="798.69" width="2.3" height="2.3"/><rect x="1021.44" y="802.04" width="2.3" height="2.3"/><rect x="1021.44" y="805.39" width="2.3" height="2.3"/><rect x="1021.44" y="812" width="2.3" height="2.3"/><rect x="1021.44" y="815.4" width="2.3" height="2.3"/><rect x="1021.44" y="818.75" width="2.3" height="2.3"/><rect x="1021.44" y="822.1" width="2.3" height="2.3"/><rect x="1021.44" y="828.71" width="2.3" height="2.3"/><rect x="1021.44" y="832.11" width="2.3" height="2.3"/><rect x="1021.44" y="835.46" width="2.3" height="2.3"/><rect x="1021.44" y="838.81" width="2.3" height="2.3"/><rect x="1021.44" y="845.42" width="2.3" height="2.3"/><rect x="1026.6" y="781.98" width="2.3" height="2.3"/><rect x="1026.6" y="785.33" width="2.3" height="2.3"/><rect x="1026.6" y="788.68" width="2.3" height="2.3"/><rect x="1026.6" y="795.29" width="2.3" height="2.3"/><rect x="1026.6" y="798.69" width="2.3" height="2.3"/><rect x="1026.6" y="802.04" width="2.3" height="2.3"/><rect x="1026.6" y="805.39" width="2.3" height="2.3"/><rect x="1026.6" y="812" width="2.3" height="2.3"/><rect x="1026.6" y="815.4" width="2.3" height="2.3"/><rect x="1026.6" y="818.75" width="2.3" height="2.3"/><rect x="1026.6" y="822.1" width="2.3" height="2.3"/><rect x="1026.6" y="828.71" width="2.3" height="2.3"/><rect x="1026.6" y="832.11" width="2.3" height="2.3"/><rect x="1026.6" y="835.46" width="2.3" height="2.3"/><rect x="1026.6" y="838.81" width="2.3" height="2.3"/><rect x="1026.6" y="845.42" width="2.3" height="2.3"/><rect x="1026.6" y="848.82" width="2.3" height="2.3"/><rect x="1026.6" y="852.17" width="2.3" height="2.3"/><rect x="1026.6" y="855.52" width="2.3" height="2.3"/><rect x="1029.8" y="778.58" width="2.3" height="2.3"/><rect x="1029.8" y="781.98" width="2.3" height="2.3"/><rect x="1029.8" y="785.33" width="2.3" height="2.3"/><rect x="1029.8" y="788.68" width="2.3" height="2.3"/><rect x="1029.8" y="795.29" width="2.3" height="2.3"/><rect x="1029.8" y="798.69" width="2.3" height="2.3"/><rect x="1029.8" y="802.04" width="2.3" height="2.3"/><rect x="1029.8" y="805.39" width="2.3" height="2.3"/><rect x="1029.8" y="812" width="2.3" height="2.3"/><rect x="1029.8" y="815.4" width="2.3" height="2.3"/><rect x="1029.8" y="818.75" width="2.3" height="2.3"/><rect x="1029.8" y="822.1" width="2.3" height="2.3"/><rect x="1029.8" y="828.71" width="2.3" height="2.3"/><rect x="1029.8" y="832.11" width="2.3" height="2.3"/><rect x="1029.8" y="835.46" width="2.3" height="2.3"/><rect x="1029.8" y="838.81" width="2.3" height="2.3"/><rect x="1029.8" y="845.42" width="2.3" height="2.3"/><rect x="1029.8" y="848.82" width="2.3" height="2.3"/><rect x="1034.97" y="788.68" width="2.3" height="2.3"/><rect x="1034.97" y="795.29" width="2.3" height="2.3"/><rect x="1034.97" y="798.69" width="2.3" height="2.3"/><rect x="1034.97" y="802.04" width="2.3" height="2.3"/><rect x="1034.97" y="805.39" width="2.3" height="2.3"/><rect x="1034.97" y="812" width="2.3" height="2.3"/><rect x="1034.97" y="815.4" width="2.3" height="2.3"/><rect x="1034.97" y="818.75" width="2.3" height="2.3"/><rect x="1034.97" y="822.1" width="2.3" height="2.3"/><rect x="1034.97" y="828.71" width="2.3" height="2.3"/><rect x="1034.97" y="832.11" width="2.3" height="2.3"/><rect x="1034.97" y="835.46" width="2.3" height="2.3"/><rect x="1034.97" y="838.81" width="2.3" height="2.3"/><rect x="1038.17" y="798.69" width="2.3" height="2.3"/><rect x="1038.17" y="802.04" width="2.3" height="2.3"/><rect x="1038.17" y="805.39" width="2.3" height="2.3"/><rect x="1038.17" y="812" width="2.3" height="2.3"/><rect x="1038.17" y="815.4" width="2.3" height="2.3"/><rect x="1038.17" y="818.75" width="2.3" height="2.3"/><rect x="1038.17" y="822.1" width="2.3" height="2.3"/><rect x="1038.17" y="828.71" width="2.3" height="2.3"/><rect x="1038.17" y="832.11" width="2.3" height="2.3"/><rect x="1038.17" y="835.46" width="2.3" height="2.3"/><rect x="1038.17" y="838.81" width="2.3" height="2.3"/><rect x="1043.33" y="798.69" width="2.3" height="2.3"/><rect x="1043.33" y="802.04" width="2.3" height="2.3"/><rect x="1043.33" y="805.39" width="2.3" height="2.3"/><rect x="1043.33" y="812" width="2.3" height="2.3"/><rect x="1043.33" y="815.4" width="2.3" height="2.3"/><rect x="1043.33" y="818.75" width="2.3" height="2.3"/><rect x="1043.33" y="822.1" width="2.3" height="2.3"/><rect x="1043.33" y="828.71" width="2.3" height="2.3"/><rect x="1043.33" y="832.11" width="2.3" height="2.3"/><rect x="1046.53" y="798.69" width="2.3" height="2.3"/><rect x="1046.53" y="802.04" width="2.3" height="2.3"/><rect x="1046.53" y="805.39" width="2.3" height="2.3"/><rect x="1046.53" y="812" width="2.3" height="2.3"/><rect x="1046.53" y="815.4" width="2.3" height="2.3"/><rect x="1046.53" y="818.75" width="2.3" height="2.3"/><rect x="1046.53" y="822.1" width="2.3" height="2.3"/><rect x="1046.53" y="828.71" width="2.3" height="2.3"/><rect x="1046.53" y="832.11" width="2.3" height="2.3"/><rect x="1051.69" y="805.39" width="2.3" height="2.3"/><rect x="1051.69" y="812" width="2.3" height="2.3"/><rect x="1051.69" y="815.4" width="2.3" height="2.3"/><rect x="1051.69" y="818.75" width="2.3" height="2.3"/><rect x="1051.69" y="822.1" width="2.3" height="2.3"/><rect x="1051.69" y="828.71" width="2.3" height="2.3"/><rect x="1054.89" y="802.04" width="2.3" height="2.3"/><rect x="1054.89" y="805.39" width="2.3" height="2.3"/><rect x="1054.89" y="812" width="2.3" height="2.3"/><rect x="1054.89" y="815.4" width="2.3" height="2.3"/><rect x="1054.89" y="818.75" width="2.3" height="2.3"/><rect x="1054.89" y="822.1" width="2.3" height="2.3"/><rect x="1054.89" y="828.71" width="2.3" height="2.3"/><rect x="1054.89" y="832.11" width="2.3" height="2.3"/><rect x="1060.05" y="802.04" width="2.3" height="2.3"/><rect x="1060.05" y="805.39" width="2.3" height="2.3"/><rect x="1060.05" y="812" width="2.3" height="2.3"/><rect x="1060.05" y="815.4" width="2.3" height="2.3"/><rect x="1060.05" y="818.75" width="2.3" height="2.3"/><rect x="1060.05" y="822.1" width="2.3" height="2.3"/><rect x="1060.05" y="828.71" width="2.3" height="2.3"/><rect x="1060.05" y="832.11" width="2.3" height="2.3"/><rect x="1063.25" y="805.39" width="2.3" height="2.3"/><rect x="1063.25" y="812" width="2.3" height="2.3"/><rect x="1063.25" y="815.4" width="2.3" height="2.3"/><rect x="1063.25" y="818.75" width="2.3" height="2.3"/><rect x="1063.25" y="822.1" width="2.3" height="2.3"/><rect x="1063.25" y="828.71" width="2.3" height="2.3"/><rect x="1063.25" y="832.11" width="2.3" height="2.3"/><rect x="1068.41" y="812" width="2.3" height="2.3"/><rect x="1068.41" y="815.4" width="2.3" height="2.3"/><rect x="1068.41" y="818.75" width="2.3" height="2.3"/><rect x="1068.41" y="822.1" width="2.3" height="2.3"/><rect x="1068.41" y="828.71" width="2.3" height="2.3"/><rect x="1071.61" y="805.39" width="2.3" height="2.3"/><rect x="1071.61" y="812" width="2.3" height="2.3"/><rect x="1071.61" y="815.4" width="2.3" height="2.3"/><rect x="1071.61" y="818.75" width="2.3" height="2.3"/><rect x="1071.61" y="822.1" width="2.3" height="2.3"/><rect x="1076.78" y="798.69" width="2.3" height="2.3"/><rect x="1076.78" y="802.04" width="2.3" height="2.3"/><rect x="1076.78" y="805.39" width="2.3" height="2.3"/><rect x="1076.78" y="812" width="2.3" height="2.3"/><rect x="1076.78" y="815.4" width="2.3" height="2.3"/><rect x="1076.78" y="818.75" width="2.3" height="2.3"/><rect x="1076.78" y="822.1" width="2.3" height="2.3"/><rect x="1076.78" y="828.71" width="2.3" height="2.3"/><rect x="1076.78" y="832.11" width="2.3" height="2.3"/><rect x="1076.78" y="835.46" width="2.3" height="2.3"/><rect x="1079.98" y="798.69" width="2.3" height="2.3"/><rect x="1079.98" y="802.04" width="2.3" height="2.3"/><rect x="1079.98" y="805.39" width="2.3" height="2.3"/><rect x="1079.98" y="812" width="2.3" height="2.3"/><rect x="1079.98" y="815.4" width="2.3" height="2.3"/><rect x="1079.98" y="818.75" width="2.3" height="2.3"/><rect x="1079.98" y="822.1" width="2.3" height="2.3"/><rect x="1079.98" y="828.71" width="2.3" height="2.3"/><rect x="1079.98" y="832.11" width="2.3" height="2.3"/><rect x="1079.98" y="835.46" width="2.3" height="2.3"/><rect x="1085.14" y="795.29" width="2.3" height="2.3"/><rect x="1085.14" y="798.69" width="2.3" height="2.3"/><rect x="1085.14" y="802.04" width="2.3" height="2.3"/><rect x="1085.14" y="805.39" width="2.3" height="2.3"/><rect x="1085.14" y="812" width="2.3" height="2.3"/><rect x="1085.14" y="815.4" width="2.3" height="2.3"/><rect x="1085.14" y="818.75" width="2.3" height="2.3"/><rect x="1085.14" y="822.1" width="2.3" height="2.3"/><rect x="1085.14" y="828.71" width="2.3" height="2.3"/><rect x="1085.14" y="832.11" width="2.3" height="2.3"/><rect x="1085.14" y="835.46" width="2.3" height="2.3"/><rect x="1085.14" y="838.81" width="2.3" height="2.3"/><rect x="1088.34" y="788.68" width="2.3" height="2.3"/><rect x="1088.34" y="795.29" width="2.3" height="2.3"/><rect x="1088.34" y="798.69" width="2.3" height="2.3"/><rect x="1088.34" y="802.04" width="2.3" height="2.3"/><rect x="1088.34" y="805.39" width="2.3" height="2.3"/><rect x="1088.34" y="812" width="2.3" height="2.3"/><rect x="1088.34" y="815.4" width="2.3" height="2.3"/><rect x="1088.34" y="818.75" width="2.3" height="2.3"/><rect x="1088.34" y="822.1" width="2.3" height="2.3"/><rect x="1088.34" y="828.71" width="2.3" height="2.3"/><rect x="1088.34" y="832.11" width="2.3" height="2.3"/><rect x="1088.34" y="835.46" width="2.3" height="2.3"/><rect x="1088.34" y="838.81" width="2.3" height="2.3"/><rect x="1093.5" y="788.68" width="2.3" height="2.3"/><rect x="1093.5" y="795.29" width="2.3" height="2.3"/><rect x="1093.5" y="798.69" width="2.3" height="2.3"/><rect x="1093.5" y="802.04" width="2.3" height="2.3"/><rect x="1093.5" y="805.39" width="2.3" height="2.3"/><rect x="1093.5" y="812" width="2.3" height="2.3"/><rect x="1093.5" y="815.4" width="2.3" height="2.3"/><rect x="1093.5" y="818.75" width="2.3" height="2.3"/><rect x="1093.5" y="822.1" width="2.3" height="2.3"/><rect x="1093.5" y="828.71" width="2.3" height="2.3"/><rect x="1093.5" y="832.11" width="2.3" height="2.3"/><rect x="1093.5" y="835.46" width="2.3" height="2.3"/><rect x="1093.5" y="838.81" width="2.3" height="2.3"/><rect x="1096.7" y="788.68" width="2.3" height="2.3"/><rect x="1096.7" y="795.29" width="2.3" height="2.3"/><rect x="1096.7" y="798.69" width="2.3" height="2.3"/><rect x="1096.7" y="802.04" width="2.3" height="2.3"/><rect x="1096.7" y="805.39" width="2.3" height="2.3"/><rect x="1096.7" y="812" width="2.3" height="2.3"/><rect x="1096.7" y="815.4" width="2.3" height="2.3"/><rect x="1096.7" y="818.75" width="2.3" height="2.3"/><rect x="1096.7" y="822.1" width="2.3" height="2.3"/><rect x="1096.7" y="828.71" width="2.3" height="2.3"/><rect x="1096.7" y="832.11" width="2.3" height="2.3"/><rect x="1096.7" y="835.46" width="2.3" height="2.3"/><rect x="1096.7" y="838.81" width="2.3" height="2.3"/><rect x="1101.86" y="788.68" width="2.3" height="2.3"/><rect x="1101.86" y="795.29" width="2.3" height="2.3"/><rect x="1101.86" y="798.69" width="2.3" height="2.3"/><rect x="1101.86" y="802.04" width="2.3" height="2.3"/><rect x="1101.86" y="805.39" width="2.3" height="2.3"/><rect x="1101.86" y="812" width="2.3" height="2.3"/><rect x="1101.86" y="815.4" width="2.3" height="2.3"/><rect x="1101.86" y="818.75" width="2.3" height="2.3"/><rect x="1101.86" y="822.1" width="2.3" height="2.3"/><rect x="1101.86" y="828.71" width="2.3" height="2.3"/><rect x="1101.86" y="832.11" width="2.3" height="2.3"/><rect x="1101.86" y="835.46" width="2.3" height="2.3"/><rect x="1105.06" y="788.68" width="2.3" height="2.3"/><rect x="1105.06" y="795.29" width="2.3" height="2.3"/><rect x="1105.06" y="798.69" width="2.3" height="2.3"/><rect x="1105.06" y="802.04" width="2.3" height="2.3"/><rect x="1105.06" y="805.39" width="2.3" height="2.3"/><rect x="1105.06" y="812" width="2.3" height="2.3"/><rect x="1105.06" y="815.4" width="2.3" height="2.3"/><rect x="1105.06" y="818.75" width="2.3" height="2.3"/><rect x="1105.06" y="822.1" width="2.3" height="2.3"/><rect x="1105.06" y="828.71" width="2.3" height="2.3"/><rect x="1105.06" y="832.11" width="2.3" height="2.3"/><rect x="1105.06" y="835.46" width="2.3" height="2.3"/><rect x="1110.22" y="798.69" width="2.3" height="2.3"/><rect x="1110.22" y="802.04" width="2.3" height="2.3"/><rect x="1110.22" y="805.39" width="2.3" height="2.3"/><rect x="1110.22" y="812" width="2.3" height="2.3"/><rect x="1110.22" y="815.4" width="2.3" height="2.3"/><rect x="1110.22" y="818.75" width="2.3" height="2.3"/><rect x="1110.22" y="822.1" width="2.3" height="2.3"/><rect x="1110.22" y="828.71" width="2.3" height="2.3"/><rect x="1110.22" y="832.11" width="2.3" height="2.3"/><rect x="1113.42" y="798.69" width="2.3" height="2.3"/><rect x="1113.42" y="802.04" width="2.3" height="2.3"/><rect x="1113.42" y="805.39" width="2.3" height="2.3"/><rect x="1113.42" y="812" width="2.3" height="2.3"/><rect x="1113.42" y="815.4" width="2.3" height="2.3"/><rect x="1113.42" y="818.75" width="2.3" height="2.3"/><rect x="1113.42" y="822.1" width="2.3" height="2.3"/><rect x="1113.42" y="828.71" width="2.3" height="2.3"/><rect x="1113.42" y="832.11" width="2.3" height="2.3"/><rect x="1113.42" y="835.46" width="2.3" height="2.3"/><rect x="1118.59" y="802.04" width="2.3" height="2.3"/><rect x="1118.59" y="805.39" width="2.3" height="2.3"/><rect x="1118.59" y="812" width="2.3" height="2.3"/><rect x="1118.59" y="815.4" width="2.3" height="2.3"/><rect x="1118.59" y="818.75" width="2.3" height="2.3"/><rect x="1118.59" y="822.1" width="2.3" height="2.3"/><rect x="1118.59" y="828.71" width="2.3" height="2.3"/><rect x="1118.59" y="832.11" width="2.3" height="2.3"/><rect x="1121.79" y="805.39" width="2.3" height="2.3"/><rect x="1121.79" y="812" width="2.3" height="2.3"/><rect x="1121.79" y="815.4" width="2.3" height="2.3"/><rect x="1121.79" y="818.75" width="2.3" height="2.3"/><rect x="1121.79" y="822.1" width="2.3" height="2.3"/><rect x="1121.79" y="828.71" width="2.3" height="2.3"/><rect x="1126.95" y="805.39" width="2.3" height="2.3"/><rect x="1126.95" y="812" width="2.3" height="2.3"/><rect x="1126.95" y="815.4" width="2.3" height="2.3"/><rect x="1126.95" y="818.75" width="2.3" height="2.3"/><rect x="1126.95" y="822.1" width="2.3" height="2.3"/><rect x="1126.95" y="828.71" width="2.3" height="2.3"/><rect x="1130.15" y="812" width="2.3" height="2.3"/><rect x="1130.15" y="815.4" width="2.3" height="2.3"/><rect x="1130.15" y="818.75" width="2.3" height="2.3"/><rect x="1130.15" y="822.1" width="2.3" height="2.3"/><rect x="1130.15" y="828.71" width="2.3" height="2.3"/><rect x="1135.31" y="802.04" width="2.3" height="2.3"/><rect x="1135.31" y="805.39" width="2.3" height="2.3"/><rect x="1135.31" y="812" width="2.3" height="2.3"/><rect x="1135.31" y="815.4" width="2.3" height="2.3"/><rect x="1135.31" y="818.75" width="2.3" height="2.3"/><rect x="1135.31" y="822.1" width="2.3" height="2.3"/><rect x="1135.31" y="828.71" width="2.3" height="2.3"/><rect x="1135.31" y="832.11" width="2.3" height="2.3"/><rect x="1135.31" y="835.46" width="2.3" height="2.3"/><rect x="1135.31" y="838.81" width="2.3" height="2.3"/><rect x="1138.51" y="798.69" width="2.3" height="2.3"/><rect x="1138.51" y="802.04" width="2.3" height="2.3"/><rect x="1138.51" y="805.39" width="2.3" height="2.3"/><rect x="1138.51" y="812" width="2.3" height="2.3"/><rect x="1138.51" y="815.4" width="2.3" height="2.3"/><rect x="1138.51" y="818.75" width="2.3" height="2.3"/><rect x="1138.51" y="822.1" width="2.3" height="2.3"/><rect x="1138.51" y="828.71" width="2.3" height="2.3"/><rect x="1138.51" y="832.11" width="2.3" height="2.3"/><rect x="1138.51" y="835.46" width="2.3" height="2.3"/><rect x="1143.67" y="788.68" width="2.3" height="2.3"/><rect x="1143.67" y="795.29" width="2.3" height="2.3"/><rect x="1143.67" y="798.69" width="2.3" height="2.3"/><rect x="1143.67" y="802.04" width="2.3" height="2.3"/><rect x="1143.67" y="805.39" width="2.3" height="2.3"/><rect x="1143.67" y="812" width="2.3" height="2.3"/><rect x="1143.67" y="815.4" width="2.3" height="2.3"/><rect x="1143.67" y="818.75" width="2.3" height="2.3"/><rect x="1143.67" y="822.1" width="2.3" height="2.3"/><rect x="1143.67" y="828.71" width="2.3" height="2.3"/><rect x="1143.67" y="832.11" width="2.3" height="2.3"/><rect x="1143.67" y="835.46" width="2.3" height="2.3"/><rect x="1143.67" y="838.81" width="2.3" height="2.3"/><rect x="1146.87" y="798.69" width="2.3" height="2.3"/><rect x="1146.87" y="802.04" width="2.3" height="2.3"/><rect x="1146.87" y="805.39" width="2.3" height="2.3"/><rect x="1146.87" y="812" width="2.3" height="2.3"/><rect x="1146.87" y="815.4" width="2.3" height="2.3"/><rect x="1146.87" y="818.75" width="2.3" height="2.3"/><rect x="1146.87" y="822.1" width="2.3" height="2.3"/><rect x="1146.87" y="828.71" width="2.3" height="2.3"/><rect x="1146.87" y="832.11" width="2.3" height="2.3"/><rect x="1146.87" y="835.46" width="2.3" height="2.3"/><rect x="1146.87" y="838.81" width="2.3" height="2.3"/><rect x="1146.87" y="845.42" width="2.3" height="2.3"/><rect x="1146.87" y="848.82" width="2.3" height="2.3"/><rect x="1152.03" y="795.29" width="2.3" height="2.3"/><rect x="1152.03" y="798.69" width="2.3" height="2.3"/><rect x="1152.03" y="802.04" width="2.3" height="2.3"/><rect x="1152.03" y="805.39" width="2.3" height="2.3"/><rect x="1152.03" y="812" width="2.3" height="2.3"/><rect x="1152.03" y="815.4" width="2.3" height="2.3"/><rect x="1152.03" y="818.75" width="2.3" height="2.3"/><rect x="1152.03" y="822.1" width="2.3" height="2.3"/><rect x="1152.03" y="828.71" width="2.3" height="2.3"/><rect x="1152.03" y="832.11" width="2.3" height="2.3"/><rect x="1152.03" y="835.46" width="2.3" height="2.3"/><rect x="1152.03" y="838.81" width="2.3" height="2.3"/><rect x="1155.23" y="802.04" width="2.3" height="2.3"/><rect x="1155.23" y="805.39" width="2.3" height="2.3"/><rect x="1155.23" y="812" width="2.3" height="2.3"/><rect x="1155.23" y="815.4" width="2.3" height="2.3"/><rect x="1155.23" y="818.75" width="2.3" height="2.3"/><rect x="1155.23" y="822.1" width="2.3" height="2.3"/><rect x="1155.23" y="828.71" width="2.3" height="2.3"/><rect x="1155.23" y="832.11" width="2.3" height="2.3"/><rect x="1160.4" y="802.04" width="2.3" height="2.3"/><rect x="1160.4" y="805.39" width="2.3" height="2.3"/><rect x="1160.4" y="812" width="2.3" height="2.3"/><rect x="1160.4" y="815.4" width="2.3" height="2.3"/><rect x="1160.4" y="818.75" width="2.3" height="2.3"/><rect x="1160.4" y="822.1" width="2.3" height="2.3"/><rect x="1160.4" y="828.71" width="2.3" height="2.3"/><rect x="1163.6" y="802.04" width="2.3" height="2.3"/><rect x="1163.6" y="805.39" width="2.3" height="2.3"/><rect x="1163.6" y="812" width="2.3" height="2.3"/><rect x="1163.6" y="815.4" width="2.3" height="2.3"/><rect x="1163.6" y="818.75" width="2.3" height="2.3"/><rect x="1163.6" y="822.1" width="2.3" height="2.3"/><rect x="1163.6" y="828.71" width="2.3" height="2.3"/><rect x="1163.6" y="832.11" width="2.3" height="2.3"/><rect x="1168.76" y="802.04" width="2.3" height="2.3"/><rect x="1168.76" y="805.39" width="2.3" height="2.3"/><rect x="1168.76" y="812" width="2.3" height="2.3"/><rect x="1168.76" y="815.4" width="2.3" height="2.3"/><rect x="1168.76" y="818.75" width="2.3" height="2.3"/><rect x="1168.76" y="822.1" width="2.3" height="2.3"/><rect x="1168.76" y="828.71" width="2.3" height="2.3"/><rect x="1171.96" y="805.39" width="2.3" height="2.3"/><rect x="1171.96" y="812" width="2.3" height="2.3"/><rect x="1171.96" y="815.4" width="2.3" height="2.3"/><rect x="1171.96" y="818.75" width="2.3" height="2.3"/><rect x="1171.96" y="822.1" width="2.3" height="2.3"/><rect x="1171.96" y="828.71" width="2.3" height="2.3"/><rect x="1171.96" y="832.11" width="2.3" height="2.3"/><rect x="1177.12" y="805.39" width="2.3" height="2.3"/><rect x="1177.12" y="812" width="2.3" height="2.3"/><rect x="1177.12" y="815.4" width="2.3" height="2.3"/><rect x="1177.12" y="818.75" width="2.3" height="2.3"/><rect x="1177.12" y="822.1" width="2.3" height="2.3"/><rect x="1180.32" y="812" width="2.3" height="2.3"/><rect x="1180.32" y="815.4" width="2.3" height="2.3"/><rect x="1180.32" y="818.75" width="2.3" height="2.3"/><rect x="1180.32" y="822.1" width="2.3" height="2.3"/><rect x="1185.48" y="812" width="2.3" height="2.3"/><rect x="1185.48" y="815.4" width="2.3" height="2.3"/><rect x="1185.48" y="818.75" width="2.3" height="2.3"/><rect x="1185.48" y="822.1" width="2.3" height="2.3"/><rect x="1188.68" y="812" width="2.3" height="2.3"/><rect x="1188.68" y="815.4" width="2.3" height="2.3"/><rect x="1188.68" y="818.75" width="2.3" height="2.3"/><rect x="1188.68" y="822.1" width="2.3" height="2.3"/><rect x="1193.84" y="812" width="2.3" height="2.3"/><rect x="1193.84" y="815.4" width="2.3" height="2.3"/><rect x="1193.84" y="818.75" width="2.3" height="2.3"/><rect x="1193.84" y="822.1" width="2.3" height="2.3"/><rect x="1197.04" y="798.69" width="2.3" height="2.3"/><rect x="1197.04" y="802.04" width="2.3" height="2.3"/><rect x="1197.04" y="805.39" width="2.3" height="2.3"/><rect x="1197.04" y="812" width="2.3" height="2.3"/><rect x="1197.04" y="815.4" width="2.3" height="2.3"/><rect x="1197.04" y="818.75" width="2.3" height="2.3"/><rect x="1197.04" y="822.1" width="2.3" height="2.3"/><rect x="1197.04" y="828.71" width="2.3" height="2.3"/><rect x="1197.04" y="832.11" width="2.3" height="2.3"/><rect x="1197.04" y="835.46" width="2.3" height="2.3"/><rect x="1197.04" y="838.81" width="2.3" height="2.3"/><rect x="1197.04" y="845.42" width="2.3" height="2.3"/><rect x="1202.21" y="798.69" width="2.3" height="2.3"/><rect x="1202.21" y="802.04" width="2.3" height="2.3"/><rect x="1202.21" y="805.39" width="2.3" height="2.3"/><rect x="1202.21" y="812" width="2.3" height="2.3"/><rect x="1202.21" y="815.4" width="2.3" height="2.3"/><rect x="1202.21" y="818.75" width="2.3" height="2.3"/><rect x="1202.21" y="822.1" width="2.3" height="2.3"/><rect x="1202.21" y="828.71" width="2.3" height="2.3"/><rect x="1202.21" y="832.11" width="2.3" height="2.3"/><rect x="1205.41" y="795.29" width="2.3" height="2.3"/><rect x="1205.41" y="798.69" width="2.3" height="2.3"/><rect x="1205.41" y="802.04" width="2.3" height="2.3"/><rect x="1205.41" y="805.39" width="2.3" height="2.3"/><rect x="1205.41" y="812" width="2.3" height="2.3"/><rect x="1205.41" y="815.4" width="2.3" height="2.3"/><rect x="1205.41" y="818.75" width="2.3" height="2.3"/><rect x="1205.41" y="822.1" width="2.3" height="2.3"/><rect x="1205.41" y="828.71" width="2.3" height="2.3"/><rect x="1205.41" y="832.11" width="2.3" height="2.3"/><rect x="1205.41" y="835.46" width="2.3" height="2.3"/><rect x="1205.41" y="838.81" width="2.3" height="2.3"/><rect x="1210.57" y="795.29" width="2.3" height="2.3"/><rect x="1210.57" y="798.69" width="2.3" height="2.3"/><rect x="1210.57" y="802.04" width="2.3" height="2.3"/><rect x="1210.57" y="805.39" width="2.3" height="2.3"/><rect x="1210.57" y="812" width="2.3" height="2.3"/><rect x="1210.57" y="815.4" width="2.3" height="2.3"/><rect x="1210.57" y="818.75" width="2.3" height="2.3"/><rect x="1210.57" y="822.1" width="2.3" height="2.3"/><rect x="1210.57" y="828.71" width="2.3" height="2.3"/><rect x="1210.57" y="832.11" width="2.3" height="2.3"/><rect x="1210.57" y="835.46" width="2.3" height="2.3"/><rect x="1210.57" y="838.81" width="2.3" height="2.3"/><rect x="1210.57" y="845.42" width="2.3" height="2.3"/><rect x="1213.77" y="798.69" width="2.3" height="2.3"/><rect x="1213.77" y="802.04" width="2.3" height="2.3"/><rect x="1213.77" y="805.39" width="2.3" height="2.3"/><rect x="1213.77" y="812" width="2.3" height="2.3"/><rect x="1213.77" y="815.4" width="2.3" height="2.3"/><rect x="1213.77" y="818.75" width="2.3" height="2.3"/><rect x="1213.77" y="822.1" width="2.3" height="2.3"/><rect x="1213.77" y="828.71" width="2.3" height="2.3"/><rect x="1213.77" y="832.11" width="2.3" height="2.3"/><rect x="1213.77" y="835.46" width="2.3" height="2.3"/><rect x="1218.93" y="805.39" width="2.3" height="2.3"/><rect x="1218.93" y="812" width="2.3" height="2.3"/><rect x="1218.93" y="815.4" width="2.3" height="2.3"/><rect x="1218.93" y="818.75" width="2.3" height="2.3"/><rect x="1218.93" y="822.1" width="2.3" height="2.3"/><rect x="1218.93" y="828.71" width="2.3" height="2.3"/><rect x="1222.13" y="805.39" width="2.3" height="2.3"/><rect x="1222.13" y="812" width="2.3" height="2.3"/><rect x="1222.13" y="815.4" width="2.3" height="2.3"/><rect x="1222.13" y="818.75" width="2.3" height="2.3"/><rect x="1222.13" y="822.1" width="2.3" height="2.3"/><rect x="1222.13" y="828.71" width="2.3" height="2.3"/><rect x="1227.29" y="812" width="2.3" height="2.3"/><rect x="1227.29" y="815.4" width="2.3" height="2.3"/><rect x="1227.29" y="818.75" width="2.3" height="2.3"/><rect x="1227.29" y="822.1" width="2.3" height="2.3"/><rect x="1230.49" y="815.4" width="2.3" height="2.3"/><rect x="1230.49" y="818.75" width="2.3" height="2.3"/><rect x="1230.49" y="822.1" width="2.3" height="2.3"/><rect x="1235.65" y="815.4" width="2.3" height="2.3"/><rect x="1235.65" y="818.75" width="2.3" height="2.3"/><rect x="1238.85" y="815.4" width="2.3" height="2.3"/><rect x="1238.85" y="818.75" width="2.3" height="2.3"/><rect x="1244.02" y="815.4" width="2.3" height="2.3"/><rect x="1244.02" y="818.75" width="2.3" height="2.3"/><rect x="1247.22" y="815.4" width="2.3" height="2.3"/><rect x="1247.22" y="818.75" width="2.3" height="2.3"/><rect x="1252.38" y="815.4" width="2.3" height="2.3"/><rect x="1252.38" y="818.75" width="2.3" height="2.3"/><rect x="1255.58" y="812" width="2.3" height="2.3"/><rect x="1255.58" y="815.4" width="2.3" height="2.3"/><rect x="1255.58" y="818.75" width="2.3" height="2.3"/><rect x="1255.58" y="822.1" width="2.3" height="2.3"/><rect x="1260.74" y="812" width="2.3" height="2.3"/><rect x="1260.74" y="815.4" width="2.3" height="2.3"/><rect x="1260.74" y="818.75" width="2.3" height="2.3"/><rect x="1260.74" y="822.1" width="2.3" height="2.3"/><rect x="1263.94" y="812" width="2.3" height="2.3"/><rect x="1263.94" y="815.4" width="2.3" height="2.3"/><rect x="1263.94" y="818.75" width="2.3" height="2.3"/><rect x="1263.94" y="822.1" width="2.3" height="2.3"/><rect x="1269.1" y="805.39" width="2.3" height="2.3"/><rect x="1269.1" y="812" width="2.3" height="2.3"/><rect x="1269.1" y="815.4" width="2.3" height="2.3"/><rect x="1269.1" y="818.75" width="2.3" height="2.3"/><rect x="1269.1" y="822.1" width="2.3" height="2.3"/><rect x="1272.3" y="805.39" width="2.3" height="2.3"/><rect x="1272.3" y="812" width="2.3" height="2.3"/><rect x="1272.3" y="815.4" width="2.3" height="2.3"/><rect x="1272.3" y="818.75" width="2.3" height="2.3"/><rect x="1272.3" y="822.1" width="2.3" height="2.3"/><rect x="1272.3" y="828.71" width="2.3" height="2.3"/><rect x="1277.46" y="805.39" width="2.3" height="2.3"/><rect x="1277.46" y="812" width="2.3" height="2.3"/><rect x="1277.46" y="815.4" width="2.3" height="2.3"/><rect x="1277.46" y="818.75" width="2.3" height="2.3"/><rect x="1277.46" y="822.1" width="2.3" height="2.3"/><rect x="1277.46" y="828.71" width="2.3" height="2.3"/><rect x="1280.66" y="812" width="2.3" height="2.3"/><rect x="1280.66" y="815.4" width="2.3" height="2.3"/><rect x="1280.66" y="818.75" width="2.3" height="2.3"/><rect x="1280.66" y="822.1" width="2.3" height="2.3"/><rect x="1285.83" y="815.4" width="2.3" height="2.3"/><rect x="1285.83" y="818.75" width="2.3" height="2.3"/><rect x="1289.03" y="815.4" width="2.3" height="2.3"/><rect x="1289.03" y="818.75" width="2.3" height="2.3"/><rect x="1294.19" y="815.4" width="2.3" height="2.3"/><rect x="1294.19" y="818.75" width="2.3" height="2.3"/><rect x="1297.39" y="815.4" width="2.3" height="2.3"/><rect x="1297.39" y="818.75" width="2.3" height="2.3"/><rect x="1302.55" y="815.4" width="2.3" height="2.3"/><rect x="1302.55" y="818.75" width="2.3" height="2.3"/><rect x="1305.75" y="815.4" width="2.3" height="2.3"/><rect x="1305.75" y="818.75" width="2.3" height="2.3"/><rect x="1310.91" y="815.4" width="2.3" height="2.3"/><rect x="1310.91" y="818.75" width="2.3" height="2.3"/><rect x="1314.11" y="815.4" width="2.3" height="2.3"/><rect x="1314.11" y="818.75" width="2.3" height="2.3"/><rect x="1319.27" y="815.4" width="2.3" height="2.3"/><rect x="1319.27" y="818.75" width="2.3" height="2.3"/><rect x="1322.47" y="815.4" width="2.3" height="2.3"/><rect x="1322.47" y="818.75" width="2.3" height="2.3"/><rect x="1327.64" y="815.4" width="2.3" height="2.3"/><rect x="1327.64" y="818.75" width="2.3" height="2.3"/><rect x="1330.84" y="815.4" width="2.3" height="2.3"/><rect x="1330.84" y="818.75" width="2.3" height="2.3"/><rect x="1336" y="815.4" width="2.3" height="2.3"/><rect x="1336" y="818.75" width="2.3" height="2.3"/><rect x="1339.2" y="815.4" width="2.3" height="2.3"/><rect x="1339.2" y="818.75" width="2.3" height="2.3"/><rect x="1344.36" y="815.4" width="2.3" height="2.3"/><rect x="1344.36" y="818.75" width="2.3" height="2.3"/><rect x="1347.56" y="815.4" width="2.3" height="2.3"/><rect x="1347.56" y="818.75" width="2.3" height="2.3"/><rect x="1352.72" y="815.4" width="2.3" height="2.3"/><rect x="1352.72" y="818.75" width="2.3" height="2.3"/><rect x="1355.92" y="815.4" width="2.3" height="2.3"/><rect x="1355.92" y="818.75" width="2.3" height="2.3"/><rect x="1361.08" y="815.4" width="2.3" height="2.3"/><rect x="1361.08" y="818.75" width="2.3" height="2.3"/><rect x="1364.28" y="815.4" width="2.3" height="2.3"/><rect x="1364.28" y="818.75" width="2.3" height="2.3"/><rect x="1369.45" y="815.4" width="2.3" height="2.3"/><rect x="1369.45" y="818.75" width="2.3" height="2.3"/><rect x="1372.65" y="815.4" width="2.3" height="2.3"/><rect x="1372.65" y="818.75" width="2.3" height="2.3"/><rect x="1377.81" y="815.4" width="2.3" height="2.3"/><rect x="1377.81" y="818.75" width="2.3" height="2.3"/><rect x="1381.01" y="815.4" width="2.3" height="2.3"/><rect x="1381.01" y="818.75" width="2.3" height="2.3"/><rect x="1386.17" y="815.4" width="2.3" height="2.3"/><rect x="1386.17" y="818.75" width="2.3" height="2.3"/><rect x="1389.37" y="815.4" width="2.3" height="2.3"/><rect x="1389.37" y="818.75" width="2.3" height="2.3"/><rect x="1394.53" y="815.4" width="2.3" height="2.3"/><rect x="1394.53" y="818.75" width="2.3" height="2.3"/><rect x="1397.73" y="815.4" width="2.3" height="2.3"/><rect x="1397.73" y="818.75" width="2.3" height="2.3"/><rect x="1402.89" y="815.4" width="2.3" height="2.3"/><rect x="1402.89" y="818.75" width="2.3" height="2.3"/><rect x="1406.09" y="815.4" width="2.3" height="2.3"/><rect x="1406.09" y="818.75" width="2.3" height="2.3"/><rect x="1411.26" y="815.4" width="2.3" height="2.3"/><rect x="1411.26" y="818.75" width="2.3" height="2.3"/><rect x="1414.46" y="815.4" width="2.3" height="2.3"/><rect x="1414.46" y="818.75" width="2.3" height="2.3"/><rect x="1419.62" y="815.4" width="2.3" height="2.3"/><rect x="1419.62" y="818.75" width="2.3" height="2.3"/><rect x="1422.82" y="815.4" width="2.3" height="2.3"/><rect x="1422.82" y="818.75" width="2.3" height="2.3"/><rect x="1427.98" y="815.4" width="2.3" height="2.3"/><rect x="1427.98" y="818.75" width="2.3" height="2.3"/><rect x="1431.18" y="815.4" width="2.3" height="2.3"/><rect x="1431.18" y="818.75" width="2.3" height="2.3"/><rect x="1436.34" y="815.4" width="2.3" height="2.3"/><rect x="1436.34" y="818.75" width="2.3" height="2.3"/><rect x="1439.54" y="815.4" width="2.3" height="2.3"/><rect x="1439.54" y="818.75" width="2.3" height="2.3"/><rect x="1444.7" y="815.4" width="2.3" height="2.3"/><rect x="1444.7" y="818.75" width="2.3" height="2.3"/><rect x="1447.9" y="815.4" width="2.3" height="2.3"/><rect x="1447.9" y="818.75" width="2.3" height="2.3"/><rect x="1453.07" y="815.4" width="2.3" height="2.3"/><rect x="1453.07" y="818.75" width="2.3" height="2.3"/><rect x="1456.27" y="815.4" width="2.3" height="2.3"/><rect x="1456.27" y="818.75" width="2.3" height="2.3"/><rect x="1461.43" y="815.4" width="2.3" height="2.3"/><rect x="1461.43" y="818.75" width="2.3" height="2.3"/><rect x="1464.63" y="815.4" width="2.3" height="2.3"/><rect x="1464.63" y="818.75" width="2.3" height="2.3"/><rect x="1469.79" y="815.4" width="2.3" height="2.3"/><rect x="1469.79" y="818.75" width="2.3" height="2.3"/><rect x="1472.99" y="815.4" width="2.3" height="2.3"/><rect x="1472.99" y="818.75" width="2.3" height="2.3"/><rect x="1478.15" y="815.4" width="2.3" height="2.3"/><rect x="1478.15" y="818.75" width="2.3" height="2.3"/><rect x="1481.35" y="815.4" width="2.3" height="2.3"/><rect x="1481.35" y="818.75" width="2.3" height="2.3"/><rect x="1486.51" y="815.4" width="2.3" height="2.3"/><rect x="1486.51" y="818.75" width="2.3" height="2.3"/><rect x="1489.71" y="815.4" width="2.3" height="2.3"/><rect x="1489.71" y="818.75" width="2.3" height="2.3"/><rect x="1494.88" y="815.4" width="2.3" height="2.3"/><rect x="1494.88" y="818.75" width="2.3" height="2.3"/><rect x="1498.08" y="815.4" width="2.3" height="2.3"/><rect x="1498.08" y="818.75" width="2.3" height="2.3"/><rect x="1503.24" y="815.4" width="2.3" height="2.3"/><rect x="1503.24" y="818.75" width="2.3" height="2.3"/><rect x="1506.44" y="815.4" width="2.3" height="2.3"/><rect x="1506.44" y="818.75" width="2.3" height="2.3"/><rect x="1511.6" y="815.4" width="2.3" height="2.3"/><rect x="1511.6" y="818.75" width="2.3" height="2.3"/><rect x="1514.8" y="815.4" width="2.3" height="2.3"/><rect x="1514.8" y="818.75" width="2.3" height="2.3"/></g></svg>
</body></html>
